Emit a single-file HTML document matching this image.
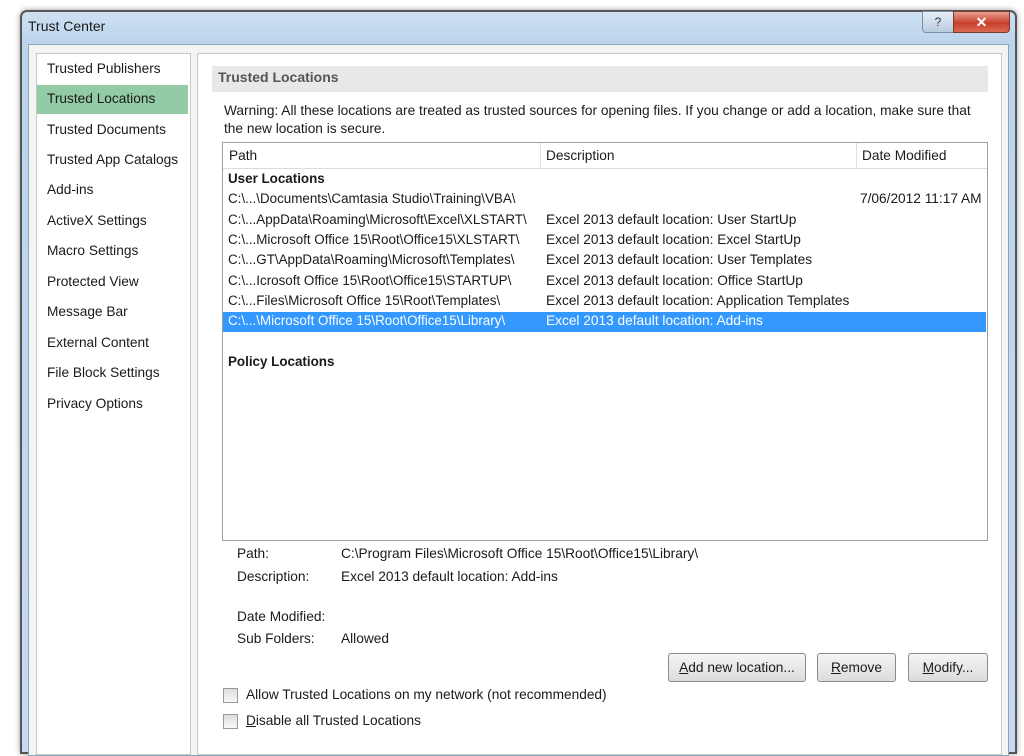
<!DOCTYPE html>
<html><head><style>
body{margin:0;width:1024px;height:738px;overflow:hidden;background:#fff;font-family:"Liberation Sans",sans-serif;font-size:13.7px;color:#1a1a1a;position:relative}
.a{position:absolute;white-space:nowrap}
#win{position:absolute;left:20px;top:10px;width:993px;height:740px;border:2px solid #555;border-radius:7px 7px 0 0;background:linear-gradient(#cfe1f3,#bcd4ec 30px,#c5daf0);box-shadow:0 0 6px rgba(0,0,0,.4)}
#inner{position:absolute;left:6px;top:32px;width:979px;height:710px;background:#f4f4f4;border:1px solid #8ea4bd}
#lp{position:absolute;left:36px;top:53px;width:153px;height:700px;background:#fff;border:1px solid #c8c8c8}
#rp{position:absolute;left:197px;top:53px;width:803px;height:700px;background:#fff;border:1px solid #c8c8c8}
.nav{position:absolute;left:47px}
.btn{position:absolute;top:653px;height:27px;border:1px solid #8a8a8a;border-radius:3px;background:linear-gradient(#f5f5f5,#dcdcdc);text-align:center;line-height:27px}
.cb{position:absolute;left:223px;width:13px;height:13px;border:1px solid #999;background:linear-gradient(#ddd,#f8f8f8)}
.row{position:absolute;left:228px;font-size:13.4px}
.d{position:absolute;left:546px}
</style></head><body>
<div id="win"><div id="inner"></div></div>
<div class="a" style="left:28px;top:18px;font-size:14px">Trust Center</div>
<div class="a" style="left:922px;top:11px;width:30px;height:20px;border:1px solid #7a8ea6;border-radius:0 0 0 4px;background:linear-gradient(#e6eef7,#b9cbe0);text-align:center;font-size:12px;line-height:20px;color:#333">?</div>
<div class="a" style="left:953px;top:11px;width:55px;height:20px;border:1px solid #7a3a30;border-radius:0 0 4px 0;background:linear-gradient(#e8a090,#c8402c 55%,#d86a55);text-align:center;color:#fff;font-size:14px;font-weight:bold;line-height:20px">✕</div>
<div id="lp"></div>
<div id="rp"></div>
<div class="a" style="left:37px;top:85px;width:151px;height:29px;background:#93cba6"></div>
<div class="a nav" style="top:61px">Trusted Publishers</div>
<div class="a nav" style="top:91px">Trusted Locations</div>
<div class="a nav" style="top:122px">Trusted Documents</div>
<div class="a nav" style="top:152px">Trusted App Catalogs</div>
<div class="a nav" style="top:182px">Add-ins</div>
<div class="a nav" style="top:213px">ActiveX Settings</div>
<div class="a nav" style="top:243px">Macro Settings</div>
<div class="a nav" style="top:274px">Protected View</div>
<div class="a nav" style="top:304px">Message Bar</div>
<div class="a nav" style="top:335px">External Content</div>
<div class="a nav" style="top:365px">File Block Settings</div>
<div class="a nav" style="top:396px">Privacy Options</div>
<div class="a" style="left:212px;top:66px;width:776px;height:26px;background:#e8e8e8"></div>
<div class="a" style="left:218px;top:69px;color:#555;font-weight:bold;font-size:14px">Trusted Locations</div>
<div class="a" style="left:224px;top:103px">Warning: All these locations are treated as trusted sources for opening files. If you change or add a location, make sure that</div>
<div class="a" style="left:224px;top:121px">the new location is secure.</div>
<div class="a" style="left:222px;top:142px;width:764px;height:397px;border:1px solid #a0a0a0;background:#fff"></div>
<div class="a" style="left:223px;top:143px;width:764px;height:25px;border-bottom:1px solid #dcdcdc"></div>
<div class="a" style="left:540px;top:143px;width:1px;height:25px;background:#e0e0e0"></div>
<div class="a" style="left:856px;top:143px;width:1px;height:25px;background:#e0e0e0"></div>
<div class="a" style="left:229px;top:148px">Path</div>
<div class="a" style="left:546px;top:148px">Description</div>
<div class="a" style="left:862px;top:148px">Date Modified</div>
<div class="a" style="left:223px;top:312px;width:763px;height:20px;background:#3399ff"></div>
<div class="a row" style="top:171px;font-weight:bold">User Locations</div>
<div class="a row" style="top:191px">C:\...\Documents\Camtasia Studio\Training\VBA\</div>
<div class="a" style="left:860px;top:191px">7/06/2012 11:17 AM</div>
<div class="a row" style="top:212px">C:\...AppData\Roaming\Microsoft\Excel\XLSTART\</div>
<div class="a d" style="top:212px">Excel 2013 default location: User StartUp</div>
<div class="a row" style="top:232px">C:\...Microsoft Office 15\Root\Office15\XLSTART\</div>
<div class="a d" style="top:232px">Excel 2013 default location: Excel StartUp</div>
<div class="a row" style="top:252px">C:\...GT\AppData\Roaming\Microsoft\Templates\</div>
<div class="a d" style="top:252px">Excel 2013 default location: User Templates</div>
<div class="a row" style="top:273px">C:\...Icrosoft Office 15\Root\Office15\STARTUP\</div>
<div class="a d" style="top:273px">Excel 2013 default location: Office StartUp</div>
<div class="a row" style="top:293px">C:\...Files\Microsoft Office 15\Root\Templates\</div>
<div class="a d" style="top:293px">Excel 2013 default location: Application Templates</div>
<div class="a row" style="top:313px;color:#fff">C:\...\Microsoft Office 15\Root\Office15\Library\</div>
<div class="a d" style="top:313px;color:#fff">Excel 2013 default location: Add-ins</div>
<div class="a row" style="top:354px;font-weight:bold">Policy Locations</div>
<div class="a" style="left:237px;top:546px">Path:</div>
<div class="a" style="left:341px;top:546px">C:\Program Files\Microsoft Office 15\Root\Office15\Library\</div>
<div class="a" style="left:237px;top:569px">Description:</div>
<div class="a" style="left:341px;top:569px">Excel 2013 default location: Add-ins</div>
<div class="a" style="left:237px;top:609px">Date Modified:</div>
<div class="a" style="left:237px;top:631px">Sub Folders:</div>
<div class="a" style="left:341px;top:631px">Allowed</div>
<div class="btn" style="left:668px;width:136px"><u>A</u>dd new location...</div>
<div class="btn" style="left:817px;width:77px"><u>R</u>emove</div>
<div class="btn" style="left:908px;width:78px"><u>M</u>odify...</div>
<div class="cb" style="top:688px"></div>
<div class="a" style="left:246px;top:687px">Allow Trusted Locations on my network (not recommended)</div>
<div class="cb" style="top:714px"></div>
<div class="a" style="left:246px;top:713px"><u>D</u>isable all Trusted Locations</div>
</body></html>
